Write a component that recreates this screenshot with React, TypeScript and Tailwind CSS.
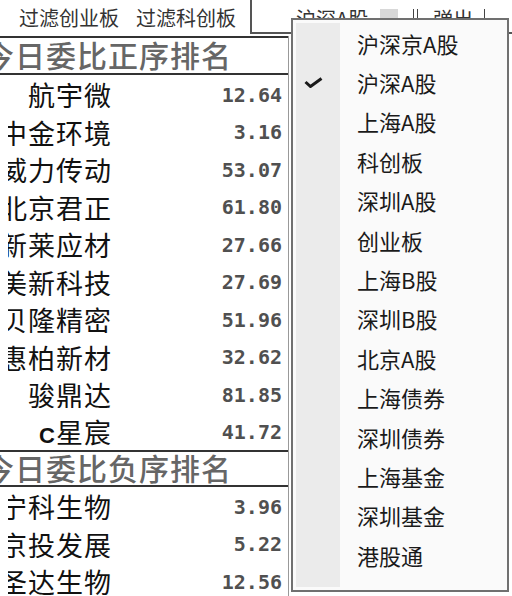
import React from "react";

type Row = { name: React.ReactNode; value: string };

const positive: Row[] = [
  { name: "航宇微", value: "12.64" },
  { name: "中金环境", value: "3.16" },
  { name: "威力传动", value: "53.07" },
  { name: "北京君正", value: "61.80" },
  { name: "新莱应材", value: "27.66" },
  { name: "美新科技", value: "27.69" },
  { name: "贝隆精密", value: "51.96" },
  { name: "惠柏新材", value: "32.62" },
  { name: "骏鼎达", value: "81.85" },
  {
    name: (
      <>
        <span className="font-['Liberation_Sans',sans-serif] font-bold text-[22px]">C</span>星宸
      </>
    ),
    value: "41.72",
  },
];

const negative: Row[] = [
  { name: "宁科生物", value: "3.96" },
  { name: "京投发展", value: "5.22" },
  { name: "圣达生物", value: "12.56" },
];

const markets = [
  "沪深京A股",
  "沪深A股",
  "上海A股",
  "科创板",
  "深圳A股",
  "创业板",
  "上海B股",
  "深圳B股",
  "北京A股",
  "上海债券",
  "深圳债券",
  "上海基金",
  "深圳基金",
  "港股通",
];

const cjk = "font-['Noto_Sans_CJK_SC',sans-serif]";

function SectionHeader({ title, height }: { title: string; height: string }) {
  return (
    <div className={`flex ${height} items-center overflow-hidden border-y-2 border-[#333] pb-[4px]`}>
      <span
        className={`${cjk} ml-[-16px] whitespace-nowrap text-[30px] font-medium leading-none tracking-[1px] text-[#666]`}
      >
        {title}
      </span>
    </div>
  );
}

function RankRow({ row }: { row: Row }) {
  return (
    <div className="flex h-[37.5px] items-center pt-[2px]">
      <div className="ml-[8px] flex w-[104px] justify-end overflow-hidden">
        <span
          className={`${cjk} shrink-0 whitespace-nowrap text-[27px] leading-none tracking-[1px] text-[#111]`}
        >
          {row.name}
        </span>
      </div>
      <div className="w-[170px] text-right font-['DejaVu_Sans_Mono',monospace] text-[20px] font-bold leading-none text-[#505050]">
        {row.value}
      </div>
    </div>
  );
}

function Check() {
  return (
    <svg width="19" height="11" viewBox="0 0 19 11" aria-hidden>
      <polyline
        points="1.5,5 6.5,9.5 17.5,1.5"
        fill="none"
        stroke="#1a1a1a"
        strokeWidth="3"
        strokeLinejoin="miter"
      />
    </svg>
  );
}

export default function App() {
  return (
    <div className="relative h-[596px] w-[512px] overflow-hidden bg-white">
      {/* toolbar */}
      <div className="flex h-[34px]">
        <div
          className={`${cjk} flex w-[252px] items-center gap-[17px] border-r-2 border-[#555] pl-[19px] pt-[2px] text-[20px] leading-none text-[#333]`}
        >
          <span>过滤创业板</span>
          <span>过滤科创板</span>
        </div>
        <div
          className={`${cjk} flex flex-1 items-start border-b-2 border-[#555] pt-[9px] text-[20px] leading-none text-[#333]`}
        >
          <span className="ml-[44px]">沪深A股</span>
          <span className="ml-[12px] h-[20px] w-[18px] bg-[#d8d8d8]" />
          <span className="ml-[15px] h-[30px] w-px bg-[#444]" />
          <span className="ml-[3px] h-[30px] w-px bg-[#444]" />
          <span className="ml-[15px]">弹出</span>
          <span className="ml-[11px] h-[30px] w-px bg-[#444]" />
        </div>
      </div>

      {/* ranking list */}
      <div className="mt-[2px] w-[289px] border-r border-[#999]">
        <SectionHeader title="今日委比正序排名" height="h-[39px]" />
        {positive.map((row) => (
          <RankRow key={row.value} row={row} />
        ))}
        <SectionHeader title="今日委比负序排名" height="h-[37px]" />
        {negative.map((row) => (
          <RankRow key={row.value} row={row} />
        ))}
      </div>

      {/* market dropdown */}
      <div className="absolute left-[291px] top-[18px] flex h-[574px] w-[218px] border-2 border-[#707070] bg-[#fafafa] p-[3px]">
        <div className="w-[44px] bg-[#ebebeb]">
          {markets.map((m, i) => (
            <div key={m} className="flex h-[39.4px] items-center justify-center pr-[9px]">
              {i === 1 && <Check />}
            </div>
          ))}
        </div>
        <div className="flex-1">
          {markets.map((m) => (
            <div
              key={m}
              className={`${cjk} flex h-[39.4px] items-center pl-[17px] text-[22px] leading-none text-[#1a1a1a]`}
            >
              {m}
            </div>
          ))}
        </div>
      </div>
    </div>
  );
}
